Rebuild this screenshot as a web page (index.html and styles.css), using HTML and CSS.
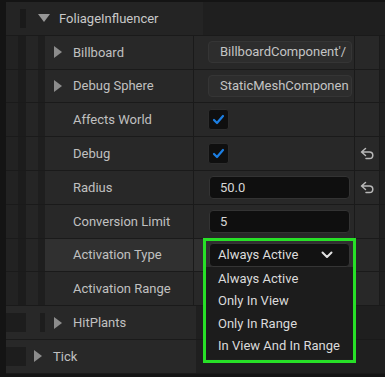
FILE: index.html
```html
<!DOCTYPE html>
<html>
<head>
<meta charset="utf-8">
<title>Details - FoliageInfluencer</title>
<link rel="stylesheet" href="styles.css">
</head>
<body>
<div class="panel">
	<div class="row cat">
		<div class="grp"><i class="cat-bar"></i><i class="tri down"></i>FoliageInfluencer</div>
		<div class="edge"></div>
	</div>

	<div class="row">
		<div class="wl"><i class="w1"></i><i class="e1"></i><i class="w2"></i><i class="e2"></i></div>
		<div class="name exp"><i class="tri right"></i>Billboard</div>
		<div class="value"><div class="obj">BillboardComponent'/</div></div>
		<div class="reset"></div>
		<div class="edge"></div>
	</div>

	<div class="row">
		<div class="wl"><i class="w1"></i><i class="e1"></i><i class="w2"></i><i class="e2"></i></div>
		<div class="name exp"><i class="tri right"></i>Debug Sphere</div>
		<div class="value"><div class="obj">StaticMeshComponen</div></div>
		<div class="reset"></div>
		<div class="edge"></div>
	</div>

	<div class="row">
		<div class="wl"><i class="w1"></i><i class="e1"></i><i class="w2"></i><i class="e2"></i></div>
		<div class="name">Affects World</div>
		<div class="value">
			<div class="check"><svg width="19" height="19" viewBox="0 0 19 19"><polyline points="5,10 8,13 14,6" fill="none" stroke="#1c7fe3" stroke-width="2.2" stroke-linecap="round" stroke-linejoin="round"/></svg></div>
		</div>
		<div class="reset"></div>
		<div class="edge"></div>
	</div>

	<div class="row">
		<div class="wl"><i class="w1"></i><i class="e1"></i><i class="w2"></i><i class="e2"></i></div>
		<div class="name">Debug</div>
		<div class="value">
			<div class="check"><svg width="19" height="19" viewBox="0 0 19 19"><polyline points="5,10 8,13 14,6" fill="none" stroke="#1c7fe3" stroke-width="2.2" stroke-linecap="round" stroke-linejoin="round"/></svg></div>
		</div>
		<div class="reset"><svg width="15" height="13" viewBox="0 0 15 13"><path d="M5.5 1.5 L1.5 5 L5.5 8.5 M1.5 5 H9.5 A3.3 3.3 0 0 1 9.5 11.6 H6" fill="none" stroke="#b8b8b8" stroke-width="1.5" stroke-linecap="round" stroke-linejoin="round"/></svg></div>
		<div class="edge"></div>
	</div>

	<div class="row">
		<div class="wl"><i class="w1"></i><i class="e1"></i><i class="w2"></i><i class="e2"></i></div>
		<div class="name">Radius</div>
		<div class="value"><div class="num">50.0</div></div>
		<div class="reset"><svg width="15" height="13" viewBox="0 0 15 13"><path d="M5.5 1.5 L1.5 5 L5.5 8.5 M1.5 5 H9.5 A3.3 3.3 0 0 1 9.5 11.6 H6" fill="none" stroke="#b8b8b8" stroke-width="1.5" stroke-linecap="round" stroke-linejoin="round"/></svg></div>
		<div class="edge"></div>
	</div>

	<div class="row">
		<div class="wl"><i class="w1"></i><i class="e1"></i><i class="w2"></i><i class="e2"></i></div>
		<div class="name">Conversion Limit</div>
		<div class="value"><div class="num">5</div></div>
		<div class="reset"></div>
		<div class="edge"></div>
	</div>

	<div class="row hover">
		<div class="wl"><i class="w1"></i><i class="e1"></i><i class="w2"></i><i class="e2"></i></div>
		<div class="name">Activation Type</div>
		<div class="value open">
			<div class="combo">Always Active<svg width="12" height="8" viewBox="0 0 12 8"><polyline points="1.5,1.5 6,6 10.5,1.5" fill="none" stroke="#e2e2e2" stroke-width="2" stroke-linecap="round" stroke-linejoin="round"/></svg></div>
			<div class="menu">
				<div class="item">Always Active</div>
				<div class="item">Only In View</div>
				<div class="item">Only In Range</div>
				<div class="item">In View And In Range</div>
			</div>
			<div class="mark"></div>
		</div>
		<div class="reset"></div>
		<div class="edge"></div>
	</div>

	<div class="row">
		<div class="wl"><i class="w1"></i><i class="e1"></i><i class="w2"></i><i class="e2"></i></div>
		<div class="name">Activation Range</div>
		<div class="value"></div>
		<div class="reset"></div>
		<div class="edge"></div>
	</div>

	<div class="row">
		<div class="grp"><i class="blk"></i><i class="blk2"></i><i class="tri right sub"></i>HitPlants</div>
		<div class="edge"></div>
	</div>

	<div class="row">
		<div class="grp"><i class="blk"></i><i class="tri right top"></i>Tick</div>
		<div class="edge"></div>
	</div>
</div>
</body>
</html>
```

FILE: styles.css
```css
* {margin:0; padding:0; box-sizing:border-box;}
body {background:#141414; width:385px; height:377px; overflow:hidden; font:13px Roboto, "Liberation Sans", sans-serif; color:#c0c0c0;}
i {display:block; flex:none;}

.panel {padding:2px 0 0 6px;}
.row {display:flex; height:33.8px; border-bottom:1px solid #1a1a1a; background:#282828;}
.row.cat {background:#242424;}

/* indent wells */
.wl {display:flex; width:39px; flex:none;}
.w1 {width:12px; background:#222;}
.e1 {width:8px; background:#1c1c1c;}
.w2 {width:12px; background:#252525;}
.e2 {width:7px; background:#1e1e1e;}

.name {width:149px; flex:none; display:flex; align-items:center; padding-left:28px; border-right:1px solid #1a1a1a; white-space:nowrap;}
.name.exp {padding-left:9px;}
.value {width:161px; flex:none; display:flex; align-items:center; padding-left:15px; border-right:1px solid #1a1a1a;}
.reset {width:25px; flex:none; display:flex; align-items:center; justify-content:center; border-right:1px solid #1a1a1a;}
.edge {flex:1; background:#1f1f1f;}
.hover .name, .hover .value {background:#303030;}

/* group rows */
.grp {flex:1; display:flex; align-items:center; white-space:nowrap;}
.cat .grp {padding-left:14px; color:#c8c8c8;}
.cat-bar {width:6px; height:19px; background:#1a1a1a; margin-right:6px;}
.blk {width:20px; height:19px; background:#1d1d1d;}
.blk2 {width:5px; height:19px; background:#1d1d1d; margin-left:14px;}

.tri {width:0; height:0;}
.tri.down {border-top:8px solid #979797; border-left:6px solid transparent; border-right:6px solid transparent; margin-left:6px; margin-right:9px;}
.tri.right {border-left:8px solid #8c8c8c; border-top:6px solid transparent; border-bottom:6px solid transparent; margin-right:11px;}
.tri.right.sub {margin-left:9px;}
.tri.right.top {margin-left:8px;}

/* values */
.obj {width:144px; height:22px; margin-left:-1px; padding:0 2px 0 11px; background:#2d2d2d; border:1px solid #353535; border-radius:4px; line-height:20px; white-space:nowrap; overflow:hidden; color:#c4c4c4;}
.num {width:141px; height:23px; padding-left:10px; background:#0f0f0f; border:1px solid #333; border-radius:4px; line-height:21px; color:#d6d6d6;}
.check {width:21px; height:21px; margin-left:-1px; background:#0f0f0f; border:1px solid #2c2c2c; border-radius:3px;}
.check svg {display:block;}

/* open combo */
.value.open {position:relative;}
.combo {width:141px; height:24px; display:flex; align-items:center; justify-content:space-between; padding:0 16px 0 8px; background:#121212; border:1px solid #353535; border-radius:4px; color:#dcdcdc;}
.menu {position:absolute; left:12px; top:28.4px; width:147px; height:92px; padding-top:1px; background:#1c1c1c;}
.item {line-height:22.4px; padding-left:12px; color:#dadada; white-space:nowrap;}
.mark {position:absolute; left:9px; top:-1px; width:153px; height:125px; border:3px solid #27e027;}
```
